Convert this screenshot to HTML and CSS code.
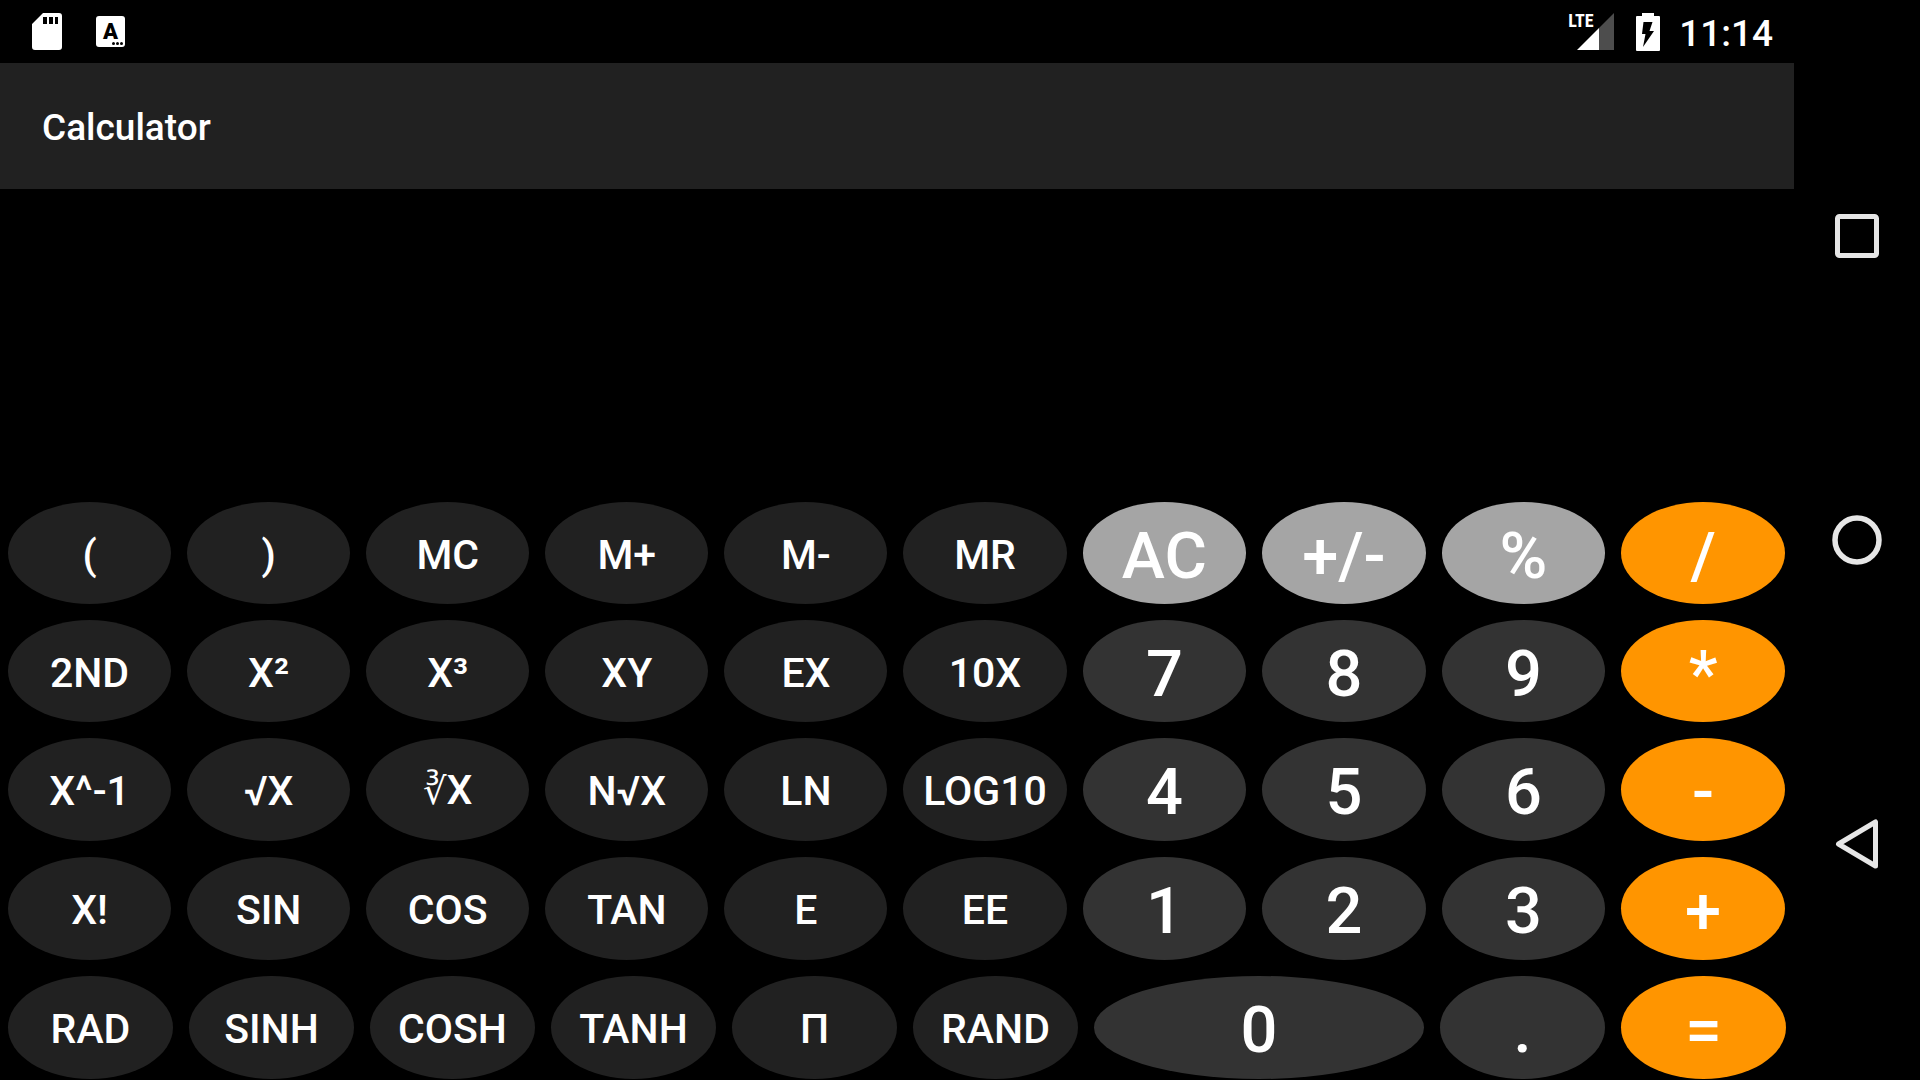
FILE: index.html
```html
<!DOCTYPE html>
<html lang="en">
<head>
<meta charset="utf-8">
<meta name="viewport" content="width=device-width, initial-scale=1">
<title>Calculator</title>
<link rel="stylesheet" href="styles.css">
</head>
<body>
<div class="screen">
  <div class="main">
    <div class="status-bar">
      <div class="status-group status-left">
        <svg class="icon-sd" width="32" height="39" viewBox="0 0 32 39" aria-hidden="true">
          <path fill="#fff" fill-rule="evenodd" d="M12 1H28Q31 1 31 4V35Q31 38 28 38H4Q1 38 1 35V12ZM12 5V12H16V5ZM18 5V12H22V5ZM24 5V12H27V5Z"/>
        </svg>
        <span class="icon-keyboard">A<span class="dots"><i></i><i></i><i></i></span></span>
      </div>
      <div class="status-group">
        <span class="signal">
          <svg width="37" height="37" viewBox="0 0 37 37" aria-hidden="true">
            <path fill="#4d4d4d" d="M22 15L37 0V37H22Z"/>
            <path fill="#fff" d="M0 37L22 15V37Z"/>
          </svg>
          <span class="signal-type">LTE</span>
        </span>
        <svg class="icon-battery" width="24" height="38" viewBox="0 0 24 38" aria-hidden="true">
          <path fill="#fff" d="M6 0H18V3H23Q24 3 24 4V37Q24 38 23 38H1Q0 38 0 37V4Q0 3 1 3H6Z"/>
          <path fill="#000" d="M7.500 9H16.500L13.500 18H18L7 34L9.500 21H6Z"/>
        </svg>
        <time class="clock">11:14</time>
      </div>
    </div>
    <header class="app-bar"><h1 class="title">Calculator</h1></header>
    <main class="calculator">
      <output class="display" aria-label="Result"></output>
      <div class="keypad">
        <div class="row">
          <button class="key">(</button><button class="key">)</button><button class="key">MC</button><button class="key">M+</button><button class="key">M-</button><button class="key">MR</button>
          <button class="key large util">AC</button><button class="key large util">+/-</button><button class="key large util">%</button><button class="key large op">/</button>
        </div>
        <div class="row">
          <button class="key">2ND</button><button class="key">X²</button><button class="key">X³</button><button class="key">XY</button><button class="key">EX</button><button class="key">10X</button>
          <button class="key large">7</button><button class="key large">8</button><button class="key large">9</button><button class="key large op">*</button>
        </div>
        <div class="row">
          <button class="key">X^-1</button><button class="key">√X</button><button class="key"><span class="cube-root">∛</span>X</button><button class="key">N√X</button><button class="key">LN</button><button class="key">LOG10</button>
          <button class="key large">4</button><button class="key large">5</button><button class="key large">6</button><button class="key large op">-</button>
        </div>
        <div class="row">
          <button class="key">X!</button><button class="key">SIN</button><button class="key">COS</button><button class="key">TAN</button><button class="key">E</button><button class="key">EE</button>
          <button class="key large">1</button><button class="key large">2</button><button class="key large">3</button><button class="key large op">+</button>
        </div>
        <div class="row row-last">
          <button class="key">RAD</button><button class="key">SINH</button><button class="key">COSH</button><button class="key">TANH</button><button class="key">Π</button><button class="key">RAND</button>
          <button class="key large wide">0</button><button class="key large">.</button><button class="key large op">=</button>
        </div>
      </div>
    </main>
  </div>
  <nav class="nav-bar" aria-label="System">
    <button class="nav-button" aria-label="Recent apps">
      <svg width="50" height="50" viewBox="0 0 50 50"><rect x="5.500" y="5.500" width="39" height="39" rx="2" fill="none" stroke="#e6e6e6" stroke-width="5"/></svg>
    </button>
    <button class="nav-button" aria-label="Home">
      <svg width="50" height="50" viewBox="0 0 50 50"><circle cx="25" cy="25" r="22" fill="none" stroke="#e6e6e6" stroke-width="5.500"/></svg>
    </button>
    <button class="nav-button" aria-label="Back">
      <svg width="50" height="50" viewBox="0 0 50 50"><path d="M43.500 3V47L6.500 25Z" fill="none" stroke="#e6e6e6" stroke-width="5" stroke-linejoin="round"/></svg>
    </button>
  </nav>
</div>
</body>
</html>
```
FILE: styles.css
```css
* {
  box-sizing: border-box;
}

body {
  margin: 0;
  background: #000;
  color: #fff;
  font-family: Roboto, "Noto Sans", "DejaVu Sans", sans-serif;
  font-weight: 500;
}

button {
  margin: 0;
  padding: 0;
  border: 0;
  background: none;
  color: inherit;
  font: inherit;
}

svg {
  display: block;
}

.screen {
  display: flex;
  min-height: 100vh;
}

.main {
  flex: 1;
  min-width: 0;
  display: flex;
  flex-direction: column;
}

/* Status bar */
.status-bar {
  height: 63px;
  padding: 0 21px 0 31px;
  display: flex;
  align-items: center;
  justify-content: space-between;
}

.status-group {
  display: flex;
  align-items: center;
}

.status-left {
  gap: 33px;
}

.icon-keyboard {
  position: relative;
  width: 29px;
  height: 31px;
  border-radius: 3px;
  background: #fff;
  color: #000;
  font-size: 22px;
  font-weight: 900;
  line-height: 31px;
  text-align: center;
}

.dots {
  position: absolute;
  right: 2px;
  bottom: 2px;
  display: flex;
  gap: 1px;
}

.dots i {
  width: 3px;
  height: 3px;
  border-radius: 50%;
  background: #000;
}

.signal {
  position: relative;
  padding-left: 9px;
  margin-right: 22px;
}

.signal-type {
  position: absolute;
  left: 0;
  top: 0;
  font-family: "Roboto Condensed", "Liberation Sans Narrow", Roboto, sans-serif;
  font-size: 18px;
  font-weight: 700;
  line-height: 16px;
}

.icon-battery {
  margin-right: 19px;
}

.clock {
  font-size: 37px;
  line-height: 44px;
  padding-top: 4px;
}

/* App bar */
.app-bar {
  height: 126px;
  padding: 3px 42px 0;
  display: flex;
  align-items: center;
  background: #212121;
}

.title {
  margin: 0;
  font-size: 37px;
  font-weight: 500;
  line-height: 44px;
}

/* Calculator */
.calculator {
  flex: 1;
  display: flex;
  flex-direction: column;
  padding: 0 8px 1px;
}

.display {
  flex: 313 0 0;
}

.keypad {
  flex: 577 0 0;
  display: grid;
  grid-template-rows: 102fr 102fr 103fr 103fr 103fr;
  gap: 16px;
}

.row {
  display: flex;
  gap: 16px;
  padding-right: 1px;
}

.row-last {
  padding-right: 0;
}

.key {
  flex: 326 0 0;
  min-width: 0;
  padding-top: 3px;
  border-radius: 50%;
  background: #212121;
  font-size: 41px;
  line-height: 48px;
  white-space: nowrap;
}

.cube-root {
  font-size: 37px;
}

.large {
  flex-grow: 327;
  background: #333;
  font-size: 65px;
  line-height: 76px;
  padding-top: 5px;
}

.row-last .key {
  flex-grow: 1;
}

.row-last .wide {
  flex-grow: 2;
}

.util {
  background: #a5a5a5;
}

.op {
  background: #ff9500;
}

/* System navigation */
.nav-bar {
  width: 126px;
  padding: 84px 0;
  display: flex;
  flex-direction: column;
}

.nav-button {
  flex: 1;
  display: flex;
  align-items: center;
  justify-content: center;
}
```
